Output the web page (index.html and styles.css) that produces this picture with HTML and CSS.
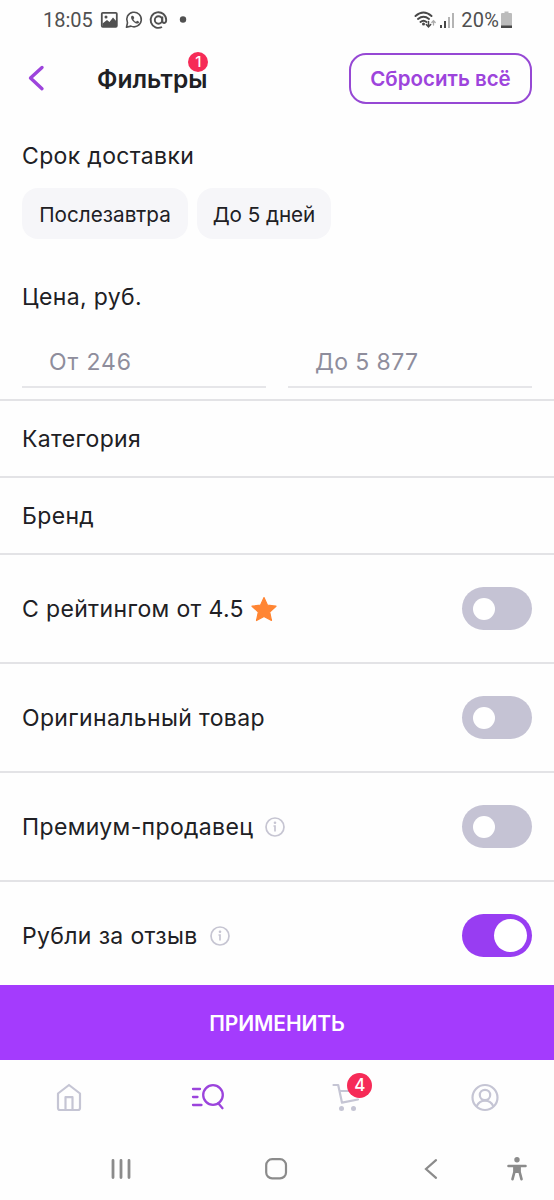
FILE: index.html
```html
<!DOCTYPE html>
<html lang="ru">
<head>
<meta charset="utf-8">
<title>Фильтры</title>
<link rel="stylesheet" href="styles.css">
</head>
<body>
<div class="screen">
  <div class="status">
    <span class="clock">18:05</span>
    <svg class="status-left" width="92" height="20" viewBox="0 0 92 20">
      <rect x="1.800" y="2.800" width="15" height="14" rx="1" fill="none" stroke="#505050" stroke-width="1.800"/>
      <circle cx="6" cy="7" r="1.500" fill="#505050"/>
      <path d="M2.500 13.500l4.500-3.500 2.500 2 3.500-4.500 4 4.500v5H2.500z" fill="#505050"/>
      <path d="M26.500 17.200l1-4.400a7.300 7.300 0 1 1 3.400 3.300z" fill="none" stroke="#505050" stroke-width="1.600" stroke-linejoin="round"/>
      <path d="M31.500 6c-2 2.500 3.500 8.500 6.500 7.500 2-1 1-2-.700-2.700l-1.300 1c-1.300-.500-2.200-1.500-2.600-2.600l.900-1.100c-.700-2.200-1.300-2.900-2.800-2.100z" fill="#505050"/>
      <circle cx="58.500" cy="10" r="3.700" fill="none" stroke="#505050" stroke-width="1.900"/>
      <path d="M62.300 6.500v4.300c0 3 3.900 3 3.900-.800a7.800 7.800 0 1 0-4.200 7" fill="none" stroke="#505050" stroke-width="1.900"/>
      <circle cx="83" cy="9.500" r="3.200" fill="#505050"/>
    </svg>
    <div class="status-right">
      <svg width="42" height="20" viewBox="0 0 42 20">
        <g fill="none" stroke="#484848" stroke-width="1.900" stroke-linecap="round">
          <path d="M1.500 6Q9.500-1 17.500 6M4 9Q9.500 4.500 15 9M6.500 12Q9.500 9.500 12.500 12"/>
          <path d="M14.500 11.500v5M12.300 14.500l2.200 2.300 2.200-2.300" stroke-width="1.500"/>
          <path d="M19.500 15v-4M17.800 12.500l1.700-1.900 1.700 1.900" stroke="#aaa" stroke-width="1.300"/>
        </g>
        <circle cx="9.500" cy="14" r="1.500" fill="#484848"/>
        <path d="M26 15h2v3h-2zM30 11h2v7h-2z" fill="#484848"/>
        <path d="M34 7h2v11h-2zM38 3h2v15h-2z" fill="#b4b4b4"/>
      </svg>
      <span class="percent">20%</span>
      <svg width="12" height="18" viewBox="0 0 12 18">
        <path d="M3.500 .500h4V2H10a1 1 0 0 1 1 1v14H0V3a1 1 0 0 1 1-1h2.500z" fill="#bcbcbc"/>
        <path d="M0 14.500h11v2.500H0z" fill="#484848"/>
      </svg>
    </div>
  </div>

  <header class="header">
    <svg class="back" width="18" height="28" viewBox="0 0 18 28"><path d="M15 3.500L3.500 14 15 24.700" fill="none" stroke="#9d44dc" stroke-width="3.400" stroke-linecap="round" stroke-linejoin="round"/></svg>
    <h1 class="title">Фильтры<span class="badge count">1</span></h1>
    <button class="reset">Сбросить всё</button>
  </header>

  <section class="delivery">
    <h2 class="label delivery-label">Срок доставки</h2>
    <div class="chips"><span class="chip soon">Послезавтра</span><span class="chip days">До 5 дней</span></div>
  </section>
  <section class="price">
    <h2 class="label price-label">Цена, руб.</h2>
    <div class="fields"><div class="field from">От 246</div><div class="field to">До 5 877</div></div>
  </section>

  <div class="row short"><span class="label category">Категория</span></div>
  <div class="row short"><span class="label brand">Бренд</span></div>
  <div class="row">
    <span class="label rating">С рейтингом от 4.5</span>
    <svg class="star" width="28" height="28" viewBox="0 0 28 28"><path d="M14 2.500l3.500 7.700 8.500 1-6.300 5.800 1.800 8.500L14 21.400l-7.500 4.100 1.800-8.500L2 11.200l8.500-1z" fill="#ff8533" stroke="#ff8533" stroke-width="1.200" stroke-linejoin="round"/></svg>
    <span class="toggle"><i class="knob"></i></span>
  </div>
  <div class="row"><span class="label original">Оригинальный товар</span><span class="toggle"><i class="knob"></i></span></div>
  <div class="row">
    <span class="label premium">Премиум-продавец</span>
    <svg class="info" width="22" height="22" viewBox="0 0 22 22"><circle cx="11" cy="11" r="9" fill="none" stroke="#c6c5d2" stroke-width="1.700"/><circle cx="11" cy="6.700" r="1.300" fill="#c6c5d2"/><path d="M9.500 10H11v5.500" fill="none" stroke="#c6c5d2" stroke-width="1.700"/></svg>
    <span class="toggle"><i class="knob"></i></span>
  </div>
  <div class="row last">
    <span class="label review">Рубли за отзыв</span>
    <svg class="info" width="22" height="22" viewBox="0 0 22 22"><circle cx="11" cy="11" r="9" fill="none" stroke="#c6c5d2" stroke-width="1.700"/><circle cx="11" cy="6.700" r="1.300" fill="#c6c5d2"/><path d="M9.500 10H11v5.500" fill="none" stroke="#c6c5d2" stroke-width="1.700"/></svg>
    <span class="toggle on"><i class="knob"></i></span>
  </div>

  <button class="apply">ПРИМЕНИТЬ</button>

  <nav class="tabs">
    <div class="tab"><svg width="28" height="30" viewBox="0 0 28 30"><path d="M3 10.500L14 2l11 8.500V25a2 2 0 0 1-2 2H5a2 2 0 0 1-2-2zM10.500 26.500V14.200h7v12.300" fill="none" stroke="#c5c5d4" stroke-width="2.200" stroke-linejoin="round"/></svg></div>
    <div class="tab"><svg width="34" height="30" viewBox="0 0 34 30"><g fill="none" stroke="#9b44dc" stroke-width="2.300" stroke-linecap="round"><path d="M2 6h7M2 14h4.500M2 22h8.500M27.500 20.500l4 4.700"/><circle cx="22" cy="12" r="9.800"/></g></svg></div>
    <div class="tab"><div class="cart"><svg width="28" height="30" viewBox="0 0 28 30"><path d="M1.500 2h4.700L10 19.700l16-3.200M7.500 8H26" fill="none" stroke="#c5c5d4" stroke-width="2.200" stroke-linecap="round" stroke-linejoin="round"/><circle cx="9.500" cy="25.500" r="2.500" fill="#c5c5d4"/><circle cx="21.500" cy="25.500" r="2.500" fill="#c5c5d4"/></svg><span class="badge cart-count">4</span></div></div>
    <div class="tab"><svg width="30" height="30" viewBox="0 0 30 30"><g fill="none" stroke="#c5c5d4" stroke-width="2.200"><circle cx="15" cy="14.500" r="12.500"/><circle cx="15" cy="12" r="5.200"/><path d="M6.500 23.500c3.500-7.800 13.500-7.800 17 0"/></g></svg></div>
  </nav>

  <div class="system">
    <svg width="24" height="24" viewBox="0 0 24 24"><path d="M4 3.500v17M12 3.500v17M20 3.500v17" stroke="#8b8b8b" stroke-width="2.800" stroke-linecap="round"/></svg>
    <svg width="24" height="24" viewBox="0 0 24 24"><rect x="2.200" y="2.200" width="19.800" height="19.200" rx="6" fill="none" stroke="#8b8b8b" stroke-width="2.200"/></svg>
    <svg width="16" height="24" viewBox="0 0 16 24"><path d="M13 3.200L3 12l10 8.800" fill="none" stroke="#8b8b8b" stroke-width="2.200" stroke-linecap="round"/></svg>
    <svg width="22" height="26" viewBox="0 0 22 26"><circle cx="11" cy="3.800" r="2.700" fill="#8b8b8b"/><path d="M2.500 10h17M8.500 10.500v5L6.500 23.200M13.500 10.500v5l2 7.700" fill="none" stroke="#8b8b8b" stroke-width="2.600" stroke-linecap="round"/><path d="M7.500 10h7v6l-1 1h-5l-1-1z" fill="#8b8b8b"/></svg>
  </div>
</div>
</body>
</html>
```
FILE: styles.css
```css
* { box-sizing: border-box; }
body { margin: 0; background: #fefefe; color: #202024; font-family: Inter, "Noto Sans", sans-serif; }
.screen { width: 554px; height: 1200px; overflow: hidden; display: flex; flex-direction: column; }
.screen > * { flex: none; }
h1, h2 { margin: 0; font-weight: 400; }
button { border: 0; padding: 0; font-family: inherit; }
svg { display: block; flex: none; }

.status { height: 40px; padding: 0 41px 0 43px; display: flex; align-items: center; font: 20px/24px Roboto, sans-serif; color: #505050; }
.clock { width: 52px; white-space: nowrap; }
.status-left { margin-left: 5px; }
.status-right { margin-left: auto; display: flex; align-items: center; }
.percent { margin: 0 2px 0 5px; letter-spacing: 0.2px; }

.header { height: 78px; display: flex; align-items: center; padding: 0 22px 2px 27px; }
.title { position: relative; margin-left: 52px; padding-top: 2px; font-size: 24.5px; line-height: 30px; font-weight: 600; }
.badge { position: absolute; display: flex; align-items: center; justify-content: center; border-radius: 50%; background: #f62b57; color: #fff; font-weight: 500; }
.count { width: 20px; height: 20px; right: -1px; top: -10px; font-size: 15px; line-height: 16px; }
.reset { margin-left: auto; width: 183px; height: 51px; border: 2px solid #9648d4; border-radius: 17px; background: #fefefe; color: #9d44dc; font-size: 20.5px; font-weight: 600; white-space: nowrap; padding-top: 1px; }

.label { font-size: 23px; line-height: 30px; letter-spacing: 0.35px; white-space: nowrap; }
.delivery { height: 158px; padding: 23px 22px 0; }
.chips { display: flex; gap: 9px; margin-top: 17px; }
.chip { height: 51px; border-radius: 16px; background: #f6f6f9; font-size: 20.7px; padding-top: 1px; display: flex; align-items: center; justify-content: center; white-space: nowrap; }
.soon { width: 166px; }
.days { width: 134px; letter-spacing: -0.05px; }
.price { height: 123px; padding: 6px 22px 0; }
.fields { display: grid; grid-template-columns: 1fr 1fr; gap: 22px; margin-top: 24px; }
.field { height: 52px; padding: 11px 27px 0; border-bottom: 2px solid #e6e6e9; color: #8e8d9c; font-size: 23px; line-height: 30px; white-space: nowrap; }
.from { letter-spacing: 0.9px; }
.to { letter-spacing: 0.4px; }

.row { height: 109px; padding: 0 22px; border-top: 2px solid #e3e3e6; display: flex; align-items: center; }
.short { height: 77px; }
.last { height: 105px; padding-top: 4px; }
.star { margin-left: 6px; }
.info { margin-left: 11px; }
.toggle { width: 70px; height: 43px; margin-left: auto; padding: 0 11px; border-radius: 22px; background: #c5c3d4; display: flex; align-items: center; }
.knob { width: 22px; height: 22px; border-radius: 50%; background: #fff; }
.on { background: #983df2; justify-content: flex-end; padding: 0 5px; }
.on .knob { width: 33px; height: 33px; }

.apply { height: 75px; padding-top: 2px; background: #a43bfd; color: #fff; font-size: 21px; font-weight: 600; letter-spacing: -0.1px; }
.tabs { height: 75px; display: grid; grid-template-columns: repeat(4, 1fr); }
.tab { display: flex; align-items: center; justify-content: center; }
.cart { position: relative; }
.cart-count { width: 25px; height: 25px; left: 15px; top: -10px; font-size: 17px; }
.system { height: 65px; padding: 3px 26px 0 109px; display: flex; align-items: center; }
.system svg:nth-child(2) { margin-left: 131px; }
.system svg:nth-child(3) { margin-left: 135px; }
.system svg:nth-child(4) { margin-left: auto; }
```
